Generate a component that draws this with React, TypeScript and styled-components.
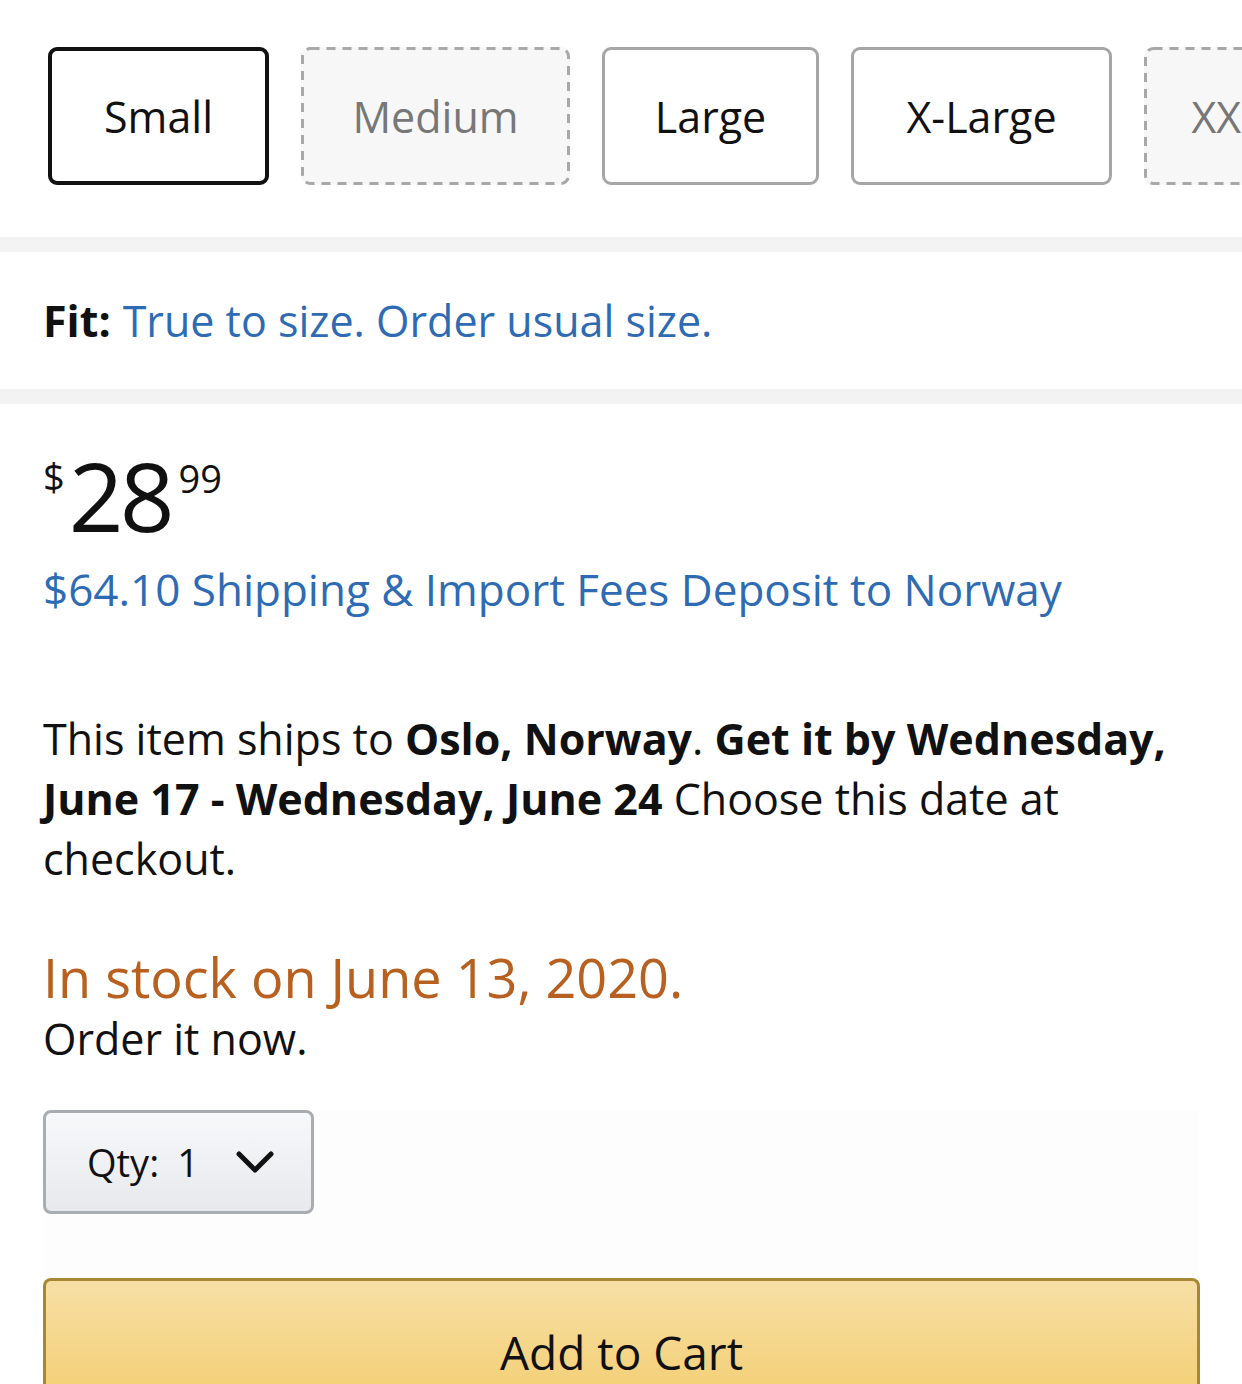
import React from "react";
import styled, { createGlobalStyle } from "styled-components";

// Style
const GlobalStyle = createGlobalStyle`
  body {
    margin: 0;
    background: #ffffff;
    font-family: "Open Sans", "Liberation Sans", sans-serif;
    color: #111111;
  }
`;

const Wrapper = styled.div`
  width: 1242px;
  height: 1384px;
  overflow: hidden;
  background: #ffffff;
`;

const SizeRow = styled.div`
  display: flex;
  gap: 32px;
  padding: 47px 0 52px 48px;
  overflow: hidden;
`;

const SizeButton = styled.div<{ $selected?: boolean; $unavailable?: boolean; $width: number }>`
  position: relative;
  flex-shrink: 0;
  box-sizing: border-box;
  width: ${(p) => p.$width}px;
  height: 138px;
  display: flex;
  align-items: center;
  justify-content: center;
  font-size: 43px;
  border-radius: 9px;
  border: ${(p) =>
    p.$selected
      ? "4px solid #111111"
      : p.$unavailable
      ? "none"
      : "3px solid #a6a6a6"};
  background: ${(p) => (p.$unavailable ? "#f7f7f7" : "#ffffff")};
  color: ${(p) => (p.$unavailable ? "#777777" : "#111111")};
`;

const DashedFrame = styled.svg`
  position: absolute;
  inset: 0;
  width: 100%;
  height: 100%;
  overflow: visible;
`;

const Divider = styled.div`
  height: 15px;
  background: #f3f3f3;
`;

const FitRow = styled.div`
  height: 137px;
  display: flex;
  align-items: center;
  padding: 0 43px;
  font-size: 43px;
  b {
    font-weight: 700;
    margin-right: 12px;
  }
  span {
    color: #2e6bb3;
  }
`;

const Main = styled.div`
  padding: 0 43px;
`;

const Price = styled.div`
  display: flex;
  align-items: flex-start;
  padding-top: 45px;
  height: 100px;
  line-height: 1;
  sup {
    font-size: 38px;
    margin-top: 8px;
    margin-right: 4px;
  }
  strong {
    font-size: 96px;
    font-weight: 400;
    letter-spacing: -4px;
    margin-top: -2px;
  }
  small {
    font-size: 38px;
    margin-top: 10px;
    margin-left: 8px;
  }
`;

const ShipLink = styled.div`
  color: #2e6bb3;
  font-size: 44px;
  margin-top: 10px;
  line-height: 60px;
`;

const ShipInfo = styled.p`
  font-size: 43px;
  line-height: 60px;
  margin: 90px 0 0;
  b {
    font-weight: 700;
  }
`;

const Stock = styled.div`
  color: #b7601f;
  font-size: 54px;
  margin-top: 58px;
  line-height: 60px;
`;

const OrderNow = styled.div`
  font-size: 43px;
  line-height: 60px;
  margin-top: 2px;
`;

const BuyBox = styled.div`
  margin-top: 41px;
  width: 1156px;
  background: #fdfdfd;
`;

const QtyButton = styled.div`
  box-sizing: border-box;
  width: 271px;
  height: 104px;
  border: 3px solid #a9acb1;
  border-radius: 8px;
  background: linear-gradient(#f7f8fa, #e7e9ec);
  display: flex;
  align-items: center;
  padding-left: 41px;
  font-size: 38px;
  gap: 18px;
  svg {
    margin-left: 18px;
  }
`;

const CartButton = styled.div`
  box-sizing: border-box;
  margin-top: 64px;
  width: 1157px;
  height: 220px;
  border: 3px solid #a88734;
  border-bottom: none;
  border-radius: 8px 8px 0 0;
  background: linear-gradient(#f7dfa5, #f0c14b);
  display: flex;
  justify-content: center;
  padding-top: 40px;
  font-size: 46px;
  color: #111111;
`;

const sizes = [
  { label: "Small", width: 221, selected: true },
  { label: "Medium", width: 269, unavailable: true },
  { label: "Large", width: 217 },
  { label: "X-Large", width: 261 },
  { label: "XX-Large", width: 270, unavailable: true },
];

function App() {
  return (
    <Wrapper>
      <GlobalStyle />
      <SizeRow>
        {sizes.map((s) => (
          <SizeButton
            key={s.label}
            $width={s.width}
            $selected={s.selected}
            $unavailable={s.unavailable}
          >
            {s.unavailable && (
              <DashedFrame>
                <rect
                  x="1.5"
                  y="1.5"
                  width={s.width - 3}
                  height="135"
                  rx="8"
                  fill="none"
                  stroke="#a8a8a8"
                  strokeWidth="3"
                  strokeDasharray="9 7"
                />
              </DashedFrame>
            )}
            {s.label}
          </SizeButton>
        ))}
      </SizeRow>
      <Divider />
      <FitRow>
        <b>Fit:</b>
        <span>True to size. Order usual size.</span>
      </FitRow>
      <Divider />
      <Main>
        <Price>
          <sup>$</sup>
          <strong>28</strong>
          <small>99</small>
        </Price>
        <ShipLink>$64.10 Shipping &amp; Import Fees Deposit to Norway</ShipLink>
        <ShipInfo>
          This item ships to <b>Oslo, Norway</b>. <b>Get it by Wednesday, June 17 - Wednesday, June 24</b> Choose this date at checkout.
        </ShipInfo>
        <Stock>In stock on June 13, 2020.</Stock>
        <OrderNow>Order it now.</OrderNow>
        <BuyBox>
          <QtyButton>
            <span>Qty:</span>
            <span>1</span>
            <svg width="40" height="26" viewBox="0 0 40 26" fill="none">
              <path d="M4 5 L20 21 L36 5" stroke="#111" strokeWidth="5" strokeLinecap="round" strokeLinejoin="round" />
            </svg>
          </QtyButton>
          <CartButton>Add to Cart</CartButton>
        </BuyBox>
      </Main>
    </Wrapper>
  );
}

export default App;
